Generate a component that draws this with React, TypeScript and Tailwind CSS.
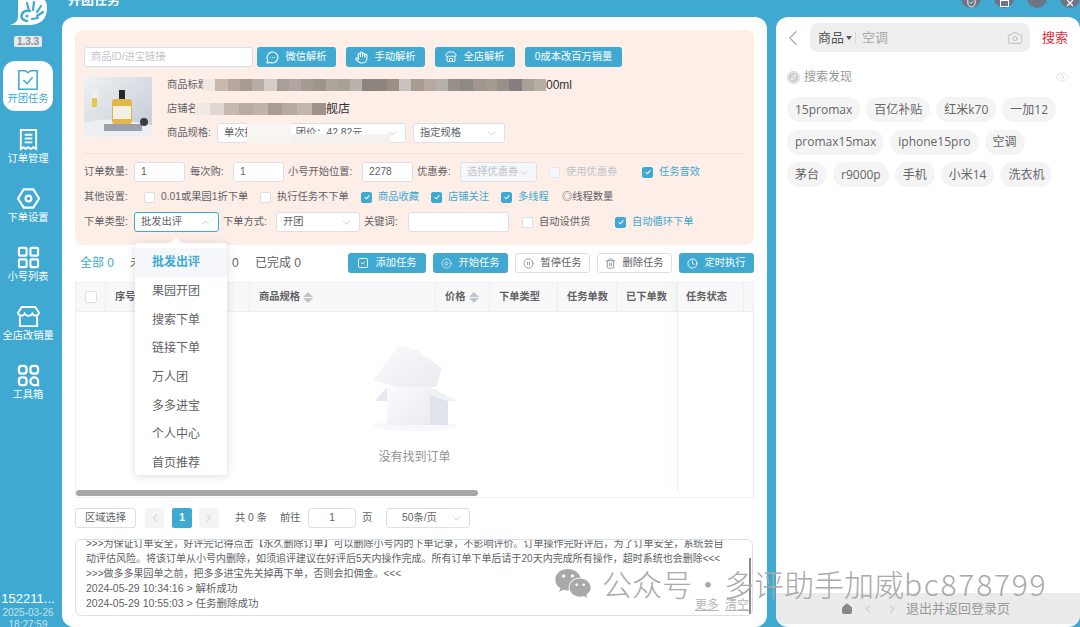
import type { ReactNode } from "react"
import { ChevronDown, ChevronUp, ChevronLeft, ChevronRight, CirclePlay, CirclePause, Trash2, Clock, Store, Camera, Eye, Compass, House, SquareCheck, Hand, MessageCircleMore, ShieldCheck, X } from "lucide-react"
import { FaWeixin } from "react-icons/fa"

const mosaicA = ["bg-[#f1e6e0]", "bg-[#c9b8ae]", "bg-[#b5a79e]", "bg-[#a79c94]", "bg-[#b8aca6]", "bg-[#d5ccc8]", "bg-[#a89f98]", "bg-[#b0a69f]", "bg-[#a39a92]", "bg-[#9d948c]", "bg-[#aea59d]", "bg-[#a8a194]", "bg-[#b8b2ae]", "bg-[#8d847e]", "bg-[#8f8580]", "bg-[#9c8f84]", "bg-[#c8c2be]", "bg-[#a69c92]", "bg-[#b7a8a4]", "bg-[#b5b0a9]", "bg-[#998f8a]", "bg-[#8f8a83]", "bg-[#a09590]", "bg-[#a39a90]", "bg-[#9a8f87]", "bg-[#85807f]", "bg-[#a8a099]", "bg-[#b5aea5]"]
const mosaicB = ["bg-[#f3e9e3]", "bg-[#e0d8d2]", "bg-[#c4b8b0]", "bg-[#b8aba4]", "bg-[#c0b3ab]", "bg-[#a99c96]", "bg-[#b7aaa3]", "bg-[#c2b7af]", "bg-[#9f938e]"]

const sortColumns = [
  { label: "商品规格", w: "w-[186px]", sort: true },
  { label: "价格", w: "w-[54px]", sort: true },
  { label: "下单类型", w: "w-[68px]", sort: false },
  { label: "任务单数", w: "w-[59px]", sort: false },
  { label: "已下单数", w: "w-[60px]", sort: false },
]

const dropdownItems = ["批发出评", "果园开团", "搜索下单", "链接下单", "万人团", "多多进宝", "个人中心", "首页推荐"]

const chipRows = [
  ["15promax", "百亿补贴", "红米k70", "一加12"],
  ["promax15max", "iphone15pro", "空调"],
  ["茅台", "r9000p", "手机", "小米14", "洗衣机"],
]

function Check({ on, off }: { on?: boolean; off?: boolean }) {
  return (
    <span className={`flex h-[11px] w-[11px] shrink-0 items-center justify-center rounded-[2px] border ${on ? "border-[#3fa9d1] bg-[#3fa9d1]" : off ? "border-[#e4e7ed] bg-[#f5f7fa]" : "border-[#dcdfe6] bg-white"}`}>
      {on && (
        <svg viewBox="0 0 10 10" className="h-[8px] w-[8px]">
          <path d="M2 5.2 4.2 7.2 8 3" fill="none" stroke="white" strokeWidth="1.3" />
        </svg>
      )}
    </span>
  )
}

function Box({ w, children, className = "" }: { w: string; children?: ReactNode; className?: string }) {
  return <div className={`flex h-[20px] shrink-0 items-center rounded-[3px] border border-[#dcdfe6] bg-white px-[6px] text-[10.25px] text-[#606266] ${w} ${className}`}>{children}</div>
}

function Sel({ w, label, up, muted, className = "" }: { w: string; label: string; up?: boolean; muted?: boolean; className?: string }) {
  return (
    <Box w={w} className={`justify-between ${className}`}>
      <span className={`whitespace-nowrap ${muted ? "text-[#c0c4cc]" : ""}`}>{label}</span>
      {up ? <ChevronUp className="h-[13px] w-[13px] shrink-0 text-[#c0c4cc]" strokeWidth={1.5} /> : <ChevronDown className="h-[13px] w-[13px] shrink-0 text-[#c0c4cc]" strokeWidth={1.5} />}
    </Box>
  )
}

function Label({ w, children, className = "" }: { w: string; children: ReactNode; className?: string }) {
  return <span className={`shrink-0 whitespace-nowrap text-[10.25px] text-[#606266] ${w} ${className}`}>{children}</span>
}

function CheckText({ on, off, w, children, className = "" }: { on?: boolean; off?: boolean; w: string; children: ReactNode; className?: string }) {
  return (
    <div className={`flex shrink-0 items-center gap-[6px] ${w} ${className}`}>
      <Check on={on} off={off} />
      <span className={`whitespace-nowrap text-[10.25px] ${on ? "text-[#3fa9d1]" : off ? "text-[#c0c4cc]" : "text-[#606266]"}`}>{children}</span>
    </div>
  )
}

function BlueBtn({ w, icon, children }: { w: string; icon?: ReactNode; children: ReactNode }) {
  return <button className={`flex h-[20px] shrink-0 items-center justify-center gap-[6px] rounded-[3px] bg-[#3fa9d1] text-[10.25px] text-white ${w}`}>{icon}{children}</button>
}

function WhiteBtn({ w, icon, children }: { w: string; icon?: ReactNode; children: ReactNode }) {
  return <button className={`flex h-[20px] shrink-0 items-center justify-center gap-[6px] rounded-[3px] border border-[#dcdfe6] bg-white text-[10.25px] text-[#606266] ${w}`}>{icon}{children}</button>
}

function Sort() {
  return (
    <span className="ml-[3px] flex flex-col gap-[1px]">
      <span className="h-0 w-0 border-x-[5px] border-b-[5px] border-x-transparent border-b-[#c0c4cc]" />
      <span className="h-0 w-0 border-x-[5px] border-t-[5px] border-x-transparent border-t-[#c0c4cc]" />
    </span>
  )
}

function NavItem({ icon, label, active }: { icon: ReactNode; label: string; active?: boolean }) {
  return (
    <div className="h-[59px] w-full">
      <div className={`mx-auto flex h-[50px] w-[50px] flex-col items-center pt-[8px] ${active ? "rounded-xl bg-white text-[#3fa9d1]" : "text-white"}`}>
        {icon}
        <span className="mt-[1px] whitespace-nowrap text-[10.25px] leading-[14px]">{label}</span>
      </div>
    </div>
  )
}

function Logo() {
  return (
    <svg viewBox="10 0 38 26" className="h-[26px] w-[38px]">
      <path d="M18 0V17Q18 23 10 25H28Q47 25 47 8 47 3 45 0Z" fill="white" />
      <path d="M27 21Q20 20 22 14 24 10 30 11" fill="none" stroke="#3fa9d1" strokeWidth="2.600" strokeLinecap="round" />
      <path d="M29 11 27 3M33 10 34 2M37 12 41 6M37 16 43 12M32 19 38 18" stroke="#3fa9d1" strokeWidth="2.200" strokeLinecap="round" />
      <circle cx="27" cy="16" r="1.600" fill="#3fa9d1" />
    </svg>
  )
}

function Bottle() {
  return (
    <svg viewBox="0 0 68 60" className="h-[60px] w-[68px] shrink-0">
      <defs>
        <linearGradient id="bg" x1="0" y1="0" x2="1" y2="1">
          <stop offset="0" stopColor="#eef1f4" />
          <stop offset="1" stopColor="#c3cad3" />
        </linearGradient>
      </defs>
      <rect width="68" height="60" fill="url(#bg)" />
      <path d="M0 46q20-8 68 2v12H0Z" fill="#eceef1" />
      <rect x="20" y="47" width="38" height="7" fill="#9ba0aa" />
      <rect x="35" y="13" width="6" height="9" fill="#26262c" />
      <rect x="28" y="22" width="20" height="25" rx="3" fill="#e2b648" />
      <rect x="29" y="29" width="18" height="13" fill="#f3efe4" />
      <path d="M7 12h7l-1 17q-1 3-2.500 3t-2.500-3Z" fill="#eef0f0" />
      <rect x="10" y="32" width="1" height="13" fill="#e8e8ea" />
      <path d="M8 21h5v8q-2.500 3-5 0Z" fill="#eac54e" />
      <circle cx="60" cy="45" r="4" fill="#3a3d45" />
    </svg>
  )
}

function EmptyBox() {
  return (
    <svg viewBox="0 0 84 86" className="h-[86px] w-[84px]">
      <defs>
        <linearGradient id="boxA" x1="0" y1="0" x2="1" y2="1">
          <stop offset="0" stopColor="#fbfbfd" />
          <stop offset="1" stopColor="#e9ebf0" />
        </linearGradient>
      </defs>
      <ellipse cx="42" cy="81" rx="42" ry="5" fill="#f7f8fb" />
      <path d="M26 0 44 5 51 11 69 23 63 42H22L0 35Z" fill="url(#boxA)" />
      <path d="M14 42 2 56H14Z" fill="#e8e9ee" />
      <path d="M57 42 84 56H75L57 50Z" fill="#f0f1f4" />
      <path d="M14 42H57V80H14Z" fill="url(#boxA)" />
      <path d="M57 50 75 56V80H57Z" fill="#e0e3ec" />
    </svg>
  )
}

export default function App() {
  return (
    <div className="relative flex h-[627px] w-[1080px] overflow-hidden bg-[#3fa9d1] font-['Liberation_Sans','Noto_Sans_CJK_SC',sans-serif]">
      {/* sidebar */}
      <aside className="flex h-full w-[62px] shrink-0 flex-col items-center">
        <div className="-ml-[5px]"><Logo /></div>
        <span className="mt-[10px] flex h-[11px] -translate-x-[3px] items-center rounded-[2px] bg-[#e6e8ea] px-[3px] text-[10px] font-bold text-[#8a9299]">1.3.3</span>
        <nav className="-ml-[6px] mt-[14px] w-[56px]">
          <NavItem
            active
            label="开团任务"
            icon={
              <svg viewBox="0 0 24 24" className="h-[22px] w-[22px]" fill="none" stroke="currentColor" strokeWidth="1.7">
                <path d="M2 2h7l3 2 3-2h7v20H2Z" />
                <path d="m7 12 4 4 6-7" />
              </svg>
            }
          />
          <NavItem
            label="订单管理"
            icon={
              <svg viewBox="0 0 24 24" className="h-[23px] w-[23px]" fill="none" stroke="currentColor" strokeWidth="2">
                <path d="M4 2h16v20l-3-2-2.500 2-3-2-2.500 2-2-2-3 2Z" />
                <path d="M8 7h8M8 11h8M8 15h8" />
              </svg>
            }
          />
          <NavItem
            label="下单设置"
            icon={
              <svg viewBox="0 0 24 24" className="h-[23px] w-[23px]" fill="none" stroke="currentColor" strokeWidth="2.200">
                <path d="M7 2.500h10L23 12l-6 9.500H7L1 12Z" />
                <circle cx="12" cy="12" r="3" />
              </svg>
            }
          />
          <NavItem
            label="小号列表"
            icon={
              <svg viewBox="0 0 24 24" className="h-[23px] w-[23px]" fill="none" stroke="currentColor" strokeWidth="2.200">
                <rect x="2" y="2" width="8" height="8" rx="1" />
                <rect x="14" y="2" width="8" height="8" rx="1" />
                <rect x="2" y="14" width="8" height="8" rx="1" />
                <rect x="14" y="14" width="8" height="8" rx="1" />
              </svg>
            }
          />
          <NavItem
            label="全店改销量"
            icon={
              <svg viewBox="0 0 24 24" className="h-[23px] w-[23px]" fill="none" stroke="currentColor" strokeWidth="2">
                <path d="M5 2h14l4 6a3.700 3.700 0 0 1-7 1 4.500 4.500 0 0 1-8 0 3.700 3.700 0 0 1-7-1Z" />
                <path d="M3 12v10h18V12" />
              </svg>
            }
          />
          <NavItem
            label="工具箱"
            icon={
              <svg viewBox="0 0 24 24" className="h-[23px] w-[23px]" fill="none" stroke="currentColor" strokeWidth="2.400">
                <rect x="2" y="2" width="8" height="8" rx="3" />
                <rect x="14" y="2" width="8" height="8" rx="3" />
                <rect x="2" y="14" width="8" height="8" rx="3" />
                <path d="M22 22h-4a4 4 0 1 1 4-4Z" />
              </svg>
            }
          />
        </nav>
        <div className="mt-auto -mb-[3px] flex -translate-x-[3px] flex-col items-center leading-none">
          <span className="whitespace-nowrap text-[13px] text-white">152211...</span>
          <span className="mt-[3px] text-[10px] text-[#c4e3ef]">2025-03-26</span>
          <span className="mt-[2px] text-[10px] text-[#c4e3ef]">18:27:59</span>
        </div>
      </aside>

      <div className="flex h-full w-[1018px] flex-col">
        {/* top bar */}
        <header className="flex h-[17px] shrink-0 items-start justify-between overflow-hidden">
          <h1 className="ml-[6px] -mt-[8px] text-[13px] font-bold leading-[16px] text-white">开团任务</h1>
          <div className="-mt-[12px] flex gap-[13px]">
            <span className="flex h-[20px] w-[20px] items-end justify-center rounded-full bg-[#6d7486]"><ShieldCheck className="h-[11px] w-[11px] text-white" /></span>
            <span className="flex h-[20px] w-[20px] items-end justify-center rounded-full bg-[#6d7486]"><span className="mb-[1px] h-[7px] w-[9px] border border-white" /></span>
            <span className="h-[20px] w-[20px] rounded-full bg-[#6d7486]" />
            <span className="flex h-[20px] w-[20px] items-end justify-center rounded-full bg-[#6d7486]"><X className="h-[10px] w-[10px] text-white" strokeWidth={3} /></span>
          </div>
        </header>

        <div className="flex h-[613px]">
          {/* main card */}
          <main className="h-full w-[705px] shrink-0 rounded-xl bg-white px-[13px] pt-[13px]">
            <section className="h-[215px] rounded-lg bg-[#fdeee7] px-[9px] pt-[17px]">
              <div className="flex items-center">
                <Box w="w-[169px]" className="!text-[#c0c4cc]">商品ID/进宝链接</Box>
                <div className="ml-[4px] flex gap-[10px]">
                  <BlueBtn w="w-[79px]" icon={<MessageCircleMore className="h-[13px] w-[13px]" />}>微信解析</BlueBtn>
                  <BlueBtn w="w-[79px]" icon={<Hand className="h-[13px] w-[13px]" />}>手动解析</BlueBtn>
                  <BlueBtn w="w-[80px]" icon={<Store className="h-[12px] w-[12px]" />}>全店解析</BlueBtn>
                  <BlueBtn w="w-[97px]">0成本改百万销量</BlueBtn>
                </div>
              </div>

              <div className="mt-[10px] flex h-[67px] items-start">
                <Bottle />
                <div className="ml-[15px] flex flex-col">
                  <div className="flex h-[16px] items-center text-[10.25px]">
                    <span className="w-[41px] shrink-0 text-[#606266]">商品标题</span>
                    <span className="-ml-[5px] flex h-[12px] w-[343px] shrink-0">
                      {mosaicA.map((c, i) => <span key={i} className={`flex-1 ${c}`} />)}
                    </span>
                    <span className="text-[12px] text-[#303133]">00ml</span>
                  </div>
                  <div className="mt-[8px] flex h-[16px] items-center text-[10.25px]">
                    <span className="w-[41px] shrink-0 text-[#606266]">店铺名称</span>
                    <span className="-ml-[13px] flex h-[12px] w-[131px] shrink-0">
                      {mosaicB.map((c, i) => <span key={i} className={`flex-1 ${c}`} />)}
                    </span>
                    <span className="text-[12px] text-[#303133]">舰店</span>
                  </div>
                  <div className="mt-[6px] flex items-center">
                    <span className="w-[50px] shrink-0 text-[10.25px] text-[#606266]">商品规格:</span>
                    <div className="relative">
                      <Sel w="w-[189px]" label="单次拼团　　　团价：42.82元" />
                      <span className="absolute left-[30px] top-0 h-[20px] w-[44px] bg-[#f8f5f3]" />
                      <span className="absolute left-[74px] top-[11px] h-[10px] w-[100px] bg-[#f6f2f0]" />
                    </div>
                    <Sel w="w-[92px]" label="指定规格" className="ml-[7px]" />
                  </div>
                </div>
              </div>

              <div className="mt-[9px] mr-[-1px] h-px bg-[#f1e3dc]" />

              <div className="mt-[8px] flex items-center">
                <Label w="w-[50px]">订单数量:</Label>
                <Box w="w-[51px]">1</Box>
                <Label w="w-[43px]" className="ml-[5px]">每次购:</Label>
                <Box w="w-[51px]">1</Box>
                <Label w="w-[74px]" className="ml-[4px]">小号开始位置:</Label>
                <Box w="w-[51px]">2278</Box>
                <Label w="w-[43px]" className="ml-[4px]">优惠券:</Label>
                <Sel w="w-[77px]" label="选择优惠券" muted className="!bg-[#f5f7fa]" />
                <CheckText off w="w-[93px]" className="ml-[12px]">使用优惠券</CheckText>
                <CheckText on w="w-[70px]">任务音效</CheckText>
              </div>

              <div className="mt-[5px] flex h-[20px] items-center">
                <Label w="w-[60px]">其他设置:</Label>
                <CheckText w="w-[116px]">0.01或果园1折下单</CheckText>
                <CheckText w="w-[101px]">执行任务不下单</CheckText>
                <CheckText on w="w-[70px]">商品收藏</CheckText>
                <CheckText on w="w-[70px]">店铺关注</CheckText>
                <CheckText on w="w-[61px]">多线程</CheckText>
                <span className="whitespace-nowrap text-[10.25px] text-[#606266]">◎线程数量</span>
              </div>

              <div className="mt-[5px] flex items-center">
                <Label w="w-[50px]">下单类型:</Label>
                <div className="relative">
                  <Sel w="w-[85px]" label="批发出评" up className="!border-[#3fa9d1]" />
                  <div className="absolute left-px top-[31px] z-10 h-[232px] w-[92px] rounded-[3px] bg-white pt-[5px] shadow-[0_1px_8px_rgba(0,0,0,0.14)]">
                    <span className="absolute -top-[4px] left-[37px] h-[8px] w-[8px] rotate-45 bg-white" />
                    {dropdownItems.map((item, i) => (
                      <div key={item} className={`relative flex h-[28.7px] items-center pl-[17px] text-[12px] ${i === 0 ? "bg-[#f5f7fa] font-bold text-[#3fa9d1]" : "text-[#606266]"}`}>{item}</div>
                    ))}
                  </div>
                </div>
                <Label w="w-[53px]" className="ml-[4px]">下单方式:</Label>
                <Sel w="w-[84px]" label="开团" />
                <Label w="w-[44px]" className="ml-[4px]">关键词:</Label>
                <Box w="w-[101px]" />
                <CheckText w="w-[93px]" className="ml-[13px]">自动设供货</CheckText>
                <CheckText on w="w-[90px]">自动循环下单</CheckText>
              </div>
            </section>

            {/* tabs + actions */}
            <div className="mt-[8px] flex h-[20px] items-center">
              <span className="ml-[5px] w-[50px] shrink-0 whitespace-nowrap text-[12px] text-[#3fa9d1]">全部 0</span>
              <span className="w-[102px] shrink-0 text-[12px] text-[#606266]">未</span>
              <span className="w-[23px] shrink-0 text-[12px] text-[#606266]">0</span>
              <span className="whitespace-nowrap text-[12px] text-[#606266]">已完成 0</span>
              <div className="ml-auto flex gap-[7px]">
                <BlueBtn w="w-[78px]" icon={<SquareCheck className="h-[12px] w-[12px]" />}>添加任务</BlueBtn>
                <BlueBtn w="w-[75px]" icon={<CirclePlay className="h-[11px] w-[11px] text-[#d0e9f3]" />}>开始任务</BlueBtn>
                <WhiteBtn w="w-[75px]" icon={<CirclePause className="h-[11px] w-[11px] text-[#909399]" />}>暂停任务</WhiteBtn>
                <WhiteBtn w="w-[75px]" icon={<Trash2 className="h-[11px] w-[11px] text-[#909399]" />}>删除任务</WhiteBtn>
                <BlueBtn w="w-[75px]" icon={<Clock className="h-[11px] w-[11px]" />}>定时执行</BlueBtn>
              </div>
            </div>

            {/* table */}
            <div className="relative mt-[9px] flex h-[216px] flex-col border border-[#ebeef5]">
              <div className="flex h-[29px] shrink-0 items-center border-b border-[#ebeef5] bg-[#f8f8f9] text-[10.25px] font-bold text-[#606266]">
                <div className="flex h-full w-[30px] items-center justify-center border-r border-[#ebeef5]">
                  <span className="h-[12px] w-[12px] rounded-[2px] border border-[#dcdfe6] bg-white" />
                </div>
                <div className="flex h-full w-[144px] items-center border-r border-[#ebeef5] pl-[9px]">序号</div>
                {sortColumns.map((c) => (
                  <div key={c.label} className={`flex h-full items-center border-r border-[#ebeef5] pl-[9px] ${c.w}`}>
                    {c.label}
                    {c.sort && <Sort />}
                  </div>
                ))}
                <div className="flex h-full w-[67px] items-center border-r border-[#ebeef5] pl-[9px]">任务状态</div>
              </div>
              <div className="flex flex-1 flex-col items-center pt-[33px]">
                <EmptyBox />
                <span className="mt-[17px] text-[12px] text-[#909399]">没有找到订单</span>
              </div>
              <span className="absolute bottom-[1px] left-0 h-[6px] w-[402px] rounded-full bg-[#a8a8a8]" />
              <span className="absolute bottom-[6px] left-[601px] top-0 w-px bg-[#eeeeee] shadow-[-4px_0_6px_rgba(0,0,0,0.08)]" />
            </div>

            {/* pagination */}
            <div className="mt-[10px] flex h-[20px] items-center text-[10.25px] text-[#606266]">
              <WhiteBtn w="w-[61px]">区域选择</WhiteBtn>
              <span className="ml-[9px] flex h-[20px] w-[19px] items-center justify-center rounded-[2px] bg-[#f4f4f5]"><ChevronLeft className="h-[12px] w-[12px] text-[#c0c4cc]" /></span>
              <span className="ml-[8px] flex h-[20px] w-[20px] items-center justify-center rounded-[2px] bg-[#3fa9d1] font-bold text-white">1</span>
              <span className="ml-[7px] flex h-[20px] w-[20px] items-center justify-center rounded-[2px] bg-[#f4f4f5]"><ChevronRight className="h-[12px] w-[12px] text-[#c0c4cc]" /></span>
              <span className="ml-[16px] w-[45px] shrink-0 whitespace-nowrap">共 0 条</span>
              <span className="w-[28px] shrink-0">前往</span>
              <Box w="w-[48px]" className="justify-center">1</Box>
              <span className="ml-[6px] w-[24px] shrink-0">页</span>
              <Sel w="w-[84px]" label="50条/页" className="pl-[15px]" />
            </div>

            {/* log */}
            <div className="relative mt-[11px] h-[77px] w-[678px] overflow-hidden rounded-md border border-[#dcdfe6] pl-[10px] text-[10px] leading-[15px] text-[#606266]">
              <div className="-mt-[4px] whitespace-nowrap">
                <p>&gt;&gt;&gt;为保证订单安全，好评完记得点击【永久删除订单】可以删除小号内的下单记录，不影响评价。订单操作完好评后，为了订单安全，系统会自</p>
                <p>动评估风险。将该订单从小号内删除，如须追评建议在好评后5天内操作完成。所有订单下单后请于20天内完成所有操作，超时系统也会删除&lt;&lt;&lt;</p>
                <p>&gt;&gt;&gt;做多多果园单之前，把多多进宝先关掉再下单，否则会扣佣金。&lt;&lt;&lt;</p>
                <p className="text-[10.5px]">2024-05-29 10:34:16 &gt; 解析成功</p>
                <p className="text-[10.5px]">2024-05-29 10:55:03 &gt; 任务删除成功</p>
              </div>
              <div className="absolute bottom-[2px] right-[3px] flex gap-[6px] text-[12px] text-[#b5b5b5] underline">
                <span>更多</span>
                <span>清空</span>
              </div>
              <span className="absolute right-[1px] top-[18px] h-[56px] w-[2px] bg-[#8a8a8a]" />
            </div>
          </main>

          {/* right card */}
          <aside className="relative ml-[9px] flex h-full w-[304px] shrink-0 flex-col overflow-hidden rounded-xl bg-white">
            <div className="mt-[6px] flex h-[29px] items-center pl-[4px]">
              <ChevronLeft className="h-[26px] w-[26px] shrink-0 text-[#aaa]" strokeWidth={1} />
              <div className="ml-[4px] flex h-[29px] w-[220px] shrink-0 items-center rounded-lg bg-[#eeeeee] pl-[8px] pr-[7px]">
                <span className="text-[13px] text-[#555]">商品</span>
                <span className="ml-[2px] h-0 w-0 border-x-[3px] border-t-[4px] border-x-transparent border-t-[#555]" />
                <span className="ml-[3px] h-[12px] w-px bg-[#d8d8d8]" />
                <span className="ml-[6px] text-[13px] text-[#aaa]">空调</span>
                <Camera className="ml-auto h-[16px] w-[16px] text-[#bbb]" strokeWidth={1.3} />
              </div>
              <span className="ml-[12px] whitespace-nowrap text-[13px] text-[#f0283c]">搜索</span>
            </div>

            <div className="mt-[16px] flex items-center px-[11px]">
              <Compass className="h-[13px] w-[13px] rounded-full bg-[#ccc] text-white" strokeWidth={1.5} />
              <span className="ml-[4px] text-[12px] text-[#999]">搜索发现</span>
              <Eye className="ml-auto h-[14px] w-[14px] text-[#ddd]" strokeWidth={1.3} />
            </div>

            <div className="mt-[11px] flex flex-col gap-[7.500px] px-[11px]">
              {chipRows.map((row, i) => (
                <div key={i} className="flex gap-[6px]">
                  {row.map((chip) => (
                    <span key={chip} className="flex h-[25px] items-center whitespace-nowrap rounded-full bg-[#f4f4f4] px-[8px] font-['Open_Sans','Noto_Sans_CJK_SC',sans-serif] text-[12px] text-[#666]">{chip}</span>
                  ))}
                </div>
              ))}
            </div>

            <div className="absolute bottom-[3px] left-0 flex h-[31px] w-full items-center bg-[#ebebeb] pl-[65px] text-[#999]">
              <House className="h-[12px] w-[12px] text-[#888]" fill="#888" />
              <ChevronLeft className="ml-[8px] h-[14px] w-[14px] text-[#aaa]" strokeWidth={1.3} />
              <ChevronRight className="ml-[10px] h-[14px] w-[14px] text-[#aaa]" strokeWidth={1.3} />
              <span className="ml-[7px] text-[13px]">退出并返回登录页</span>
            </div>
          </aside>
        </div>
      </div>

      {/* article watermark */}
      <div className="absolute left-[553px] top-[566px] z-20 flex items-center text-[#a9a9a9] font-['Noto_Sans_CJK_SC',sans-serif] text-[30px] font-light leading-[34px]">
        <FaWeixin className="h-[33px] w-[40px]" />
        <span className="ml-[9px] whitespace-nowrap">公众号</span>
        <span className="ml-[1px] whitespace-nowrap">·</span>
        <span className="ml-[1px] whitespace-nowrap">多评助手加威</span>
        <span className="whitespace-nowrap tracking-[1.75px]">bc878799</span>
      </div>
    </div>
  )
}
